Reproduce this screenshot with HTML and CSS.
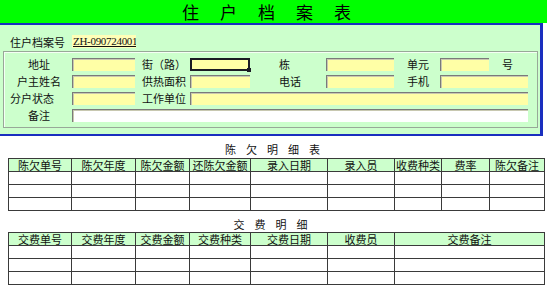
FILE: index.html
```html
<!DOCTYPE html>
<html lang="zh-CN">
  <head>
    <meta charset="UTF-8" />
    <meta name="viewport" content="width=device-width, initial-scale=1.0" />
    <title>住户档案表</title>
    <link rel="stylesheet" href="styles.css">
  </head>
  <body>
    <div class="title-bar">住户档案表</div>

    <div class="panel">
      <div class="record-row">
        <span class="record-label">住户档案号</span>
        <span class="record-no">ZH-090724001</span>
      </div>

      <div class="group-box">
        <div class="form-grid">
          <span class="lbl lbl-a">地址</span>
          <span class="field"></span>
          <span class="lbl lbl-b">街（路）</span>
          <span class="field field-active"></span>
          <span class="lbl lbl-c">栋</span>
          <span class="field"></span>
          <span class="lbl lbl-d">单元</span>
          <span class="field"></span>
          <span class="lbl lbl-e">号</span>

          <span class="lbl lbl-a">户主姓名</span>
          <span class="field"></span>
          <span class="lbl lbl-b">供热面积</span>
          <span class="field"></span>
          <span class="lbl lbl-c">电话</span>
          <span class="field"></span>
          <span class="lbl lbl-d">手机</span>
          <span class="field span-2"></span>

          <span class="lbl lbl-a lbl-left">分户状态</span>
          <span class="field"></span>
          <span class="lbl lbl-b">工作单位</span>
          <span class="field span-6"></span>

          <span class="lbl lbl-a">备注</span>
          <span class="field field-white span-8"></span>
        </div>
      </div>
    </div>

    <div class="section-title">陈欠明细表</div>
    <table class="grid">
      <colgroup>
        <col style="width: 63px">
        <col style="width: 64px">
        <col style="width: 54px">
        <col style="width: 61px">
        <col style="width: 77px">
        <col style="width: 67px">
        <col style="width: 47px">
        <col style="width: 48px">
        <col style="width: 55px">
      </colgroup>
      <thead>
        <tr>
          <th>陈欠单号</th>
          <th>陈欠年度</th>
          <th>陈欠金额</th>
          <th>还陈欠金额</th>
          <th>录入日期</th>
          <th>录入员</th>
          <th>收费种类</th>
          <th>费率</th>
          <th>陈欠备注</th>
        </tr>
      </thead>
      <tbody>
        <tr><td></td><td></td><td></td><td></td><td></td><td></td><td></td><td></td><td></td></tr>
        <tr><td></td><td></td><td></td><td></td><td></td><td></td><td></td><td></td><td></td></tr>
        <tr><td></td><td></td><td></td><td></td><td></td><td></td><td></td><td></td><td></td></tr>
      </tbody>
    </table>

    <div class="section-title section-second">交费明细</div>
    <table class="grid">
      <colgroup>
        <col style="width: 63px">
        <col style="width: 64px">
        <col style="width: 54px">
        <col style="width: 61px">
        <col style="width: 77px">
        <col style="width: 67px">
        <col style="width: 150px">
      </colgroup>
      <thead>
        <tr>
          <th>交费单号</th>
          <th>交费年度</th>
          <th>交费金额</th>
          <th>交费种类</th>
          <th>交费日期</th>
          <th>收费员</th>
          <th>交费备注</th>
        </tr>
      </thead>
      <tbody>
        <tr><td></td><td></td><td></td><td></td><td></td><td></td><td></td></tr>
        <tr><td></td><td></td><td></td><td></td><td></td><td></td><td></td></tr>
        <tr><td></td><td></td><td></td><td></td><td></td><td></td><td></td></tr>
      </tbody>
    </table>
  </body>
</html>
```

FILE: styles.css
```css
body {
  font-family: "Noto Sans CJK SC", "Noto Sans", sans-serif;
  font-size: 11px;
  color: #111;
  margin: 0;
  padding: 0;
  width: 547px;
  background-color: #fff;
}

.title-bar {
  height: 23px;
  line-height: 23px;
  background-color: #00ff00;
  font-size: 17px;
  letter-spacing: 21px;
  text-align: center;
  padding-left: 7px;
  color: #000;
}

.panel {
  width: 540px;
  background-color: #ccffcc;
  border-top: 2px solid #1a2fbf;
  border-right: 3px solid #1a2fbf;
  border-bottom: 2px solid #1a2fbf;
  padding: 10px 0 6px 0;
}

.record-row {
  display: flex;
  align-items: center;
  height: 13px;
}

.record-label {
  width: 62px;
  padding-left: 10px;
  white-space: nowrap;
}

.record-no {
  width: 64px;
  height: 13px;
  line-height: 13px;
  background-color: #ffffb8;
  font-family: "Liberation Serif", serif;
  font-size: 11px;
  letter-spacing: -0.3px;
  text-decoration: underline;
  white-space: nowrap;
  overflow: hidden;
  padding-left: 1px;
  box-sizing: border-box;
}

.group-box {
  margin: 3px 0 0 3px;
  width: 527px;
  border: 1px solid #98a898;
  box-shadow: inset 1px 1px 0 #f4fff4;
  padding: 6px 0 5px 6px;
}

.form-grid {
  display: grid;
  grid-template-columns: 62px 63px 55px 60px 76px 68px 46px 49px 39px;
  grid-auto-rows: 13px;
  row-gap: 4px;
  align-items: center;
}

.lbl {
  line-height: 13px;
  white-space: nowrap;
}

.lbl-a {
  text-align: center;
  padding-right: 4px;
}

.lbl-left {
  padding-right: 18px;
}

.lbl-b {
  padding-left: 7px;
}

.lbl-c {
  padding-left: 29px;
}

.lbl-d {
  padding-left: 13px;
}

.lbl-e {
  padding-left: 13px;
}

.field {
  position: relative;
  height: 13px;
  background-color: #ffffa6;
  border-top: 1px solid #7a7a7a;
  border-left: 1px solid #7a7a7a;
  box-shadow: inset 1px 1px 0 #c8c8b0;
  box-sizing: border-box;
}

.field-white {
  background-color: #fff;
}

.field-active {
  border: 2px solid #1b1b24;
  box-shadow: none;
}

.field-active::after {
  content: "";
  position: absolute;
  right: -3px;
  bottom: -3px;
  width: 4px;
  height: 4px;
  background-color: #1b1b24;
}

.span-2 {
  grid-column: span 2;
}

.span-6 {
  grid-column: span 6;
}

.span-8 {
  grid-column: span 8;
}

.section-title {
  margin-top: 6px;
  margin-bottom: 2px;
  height: 14px;
  line-height: 14px;
  text-align: center;
  letter-spacing: 10px;
  padding-left: 8px;
}

.section-second {
  margin-top: 6px;
  margin-bottom: 1px;
  padding-left: 4px;
}

.grid {
  margin: 0 0 0 8px;
  width: 536px;
  table-layout: fixed;
  border-collapse: collapse;
}

.grid th,
.grid td {
  border: 1px solid #3a3a3a;
  padding: 0;
  height: 12px;
  line-height: 12px;
  font-weight: normal;
  text-align: center;
  overflow: hidden;
  white-space: nowrap;
}

.grid th {
  background-color: #ccffcc;
  font-size: 11px;
}
```
